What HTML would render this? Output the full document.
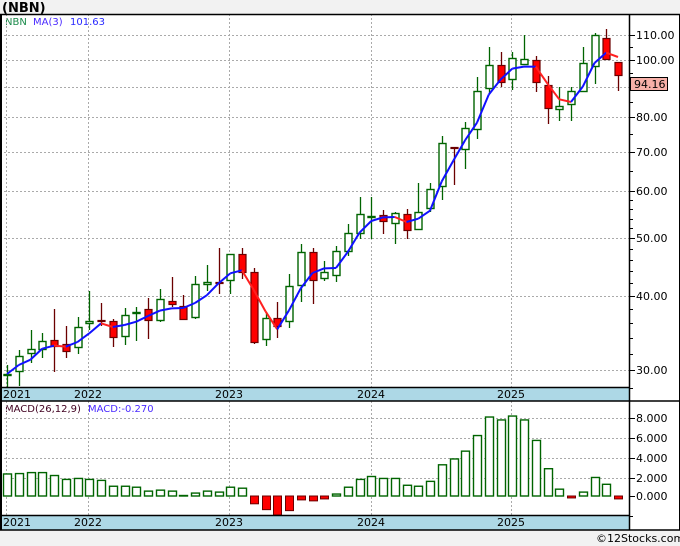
<!DOCTYPE html>
<html><head><meta charset="utf-8"><style>
html,body{margin:0;padding:0;background:#f2f2f2;}
svg{display:block;font-family:"DejaVu Sans","Liberation Sans",sans-serif;}
</style></head><body>
<svg id="s" width="680" height="546" xmlns="http://www.w3.org/2000/svg">
<rect x="0" y="0" width="680" height="546" fill="#f2f2f2"/>
<rect x="0" y="14" width="680" height="516" fill="#fff"/>
<text x="2" y="12" font-size="13" font-weight="bold" fill="#000">(NBN)</text>
<text x="5" y="25" font-size="10" fill="#1a8a4a">NBN</text>
<text x="33" y="25" font-size="10" fill="#4a2aff">MA(3)</text>
<text x="70" y="25" font-size="10" fill="#2a2aff">101.63</text>
<text x="5" y="412" font-size="10" fill="#400020">MACD(26,12,9)</text>
<text x="88" y="412" font-size="10" fill="#4a2aff">MACD:-0.270</text>
<text x="596" y="542" font-size="11" fill="#000">©12Stocks.com</text>
<g id="g"></g>
</svg>
<script>
var g=document.getElementById('g'),h='';
function L(x1,y1,x2,y2,c,w,d){h+='<line x1="'+x1+'" y1="'+y1+'" x2="'+x2+'" y2="'+y2+'" stroke="'+c+'" stroke-width="'+(w||1)+'"'+(d?' stroke-dasharray="'+d+'"':'')+'/>';}
function R(x,y,w,hh,f,s,sw){h+='<rect x="'+x+'" y="'+y+'" width="'+w+'" height="'+hh+'" fill="'+f+'" stroke="'+(s||'none')+'" stroke-width="'+(sw||1)+'"/>';}
function T(x,y,t,c,fs){h+='<text x="'+x+'" y="'+y+'" font-size="'+(fs||11)+'" fill="'+(c||'#000')+'">'+t+'</text>';}
var Y=function(p){return 35+258*Math.log(110/p);};
[110,100,90,80,70,60,50,40,30].forEach(function(p){var y=Math.round(Y(p))+.5;L(0,y,629,y,'#aaa',1,'2,2');});
[418,438,458,478].forEach(function(y){L(0,y+.5,629,y+.5,'#aaa',1,'2,2');});
[6,88,229,371,511].forEach(function(x){L(x+.5,14,x+.5,387,'#aaa',1,'2,2');L(x+.5,401,x+.5,515,'#aaa',1,'2,2');});
var C=[[365,374,376,387,1],[350,356,372,386,1],[330,349,354,363,1],[333,341,350,358,1],[309,340,347,372,0],[326,344,352,358,0],[317,327,348,354,1],[291,321,324,330,1],[303,320,322,326,0],[319,321,338,347,0],[308,315,337,345,1],[307,312,314,341,1],[298,309,321,339,0],[289,299,321,322,1],[277,301,305,307,0],[295,306,320,320,0],[276,284,318,319,1],[265,282,285,291,1],[248,282,284,294,0],[254,254,281,294,1],[248,254,273,279,0],[268,272,343,344,0],[312,318,340,346,1],[302,318,327,338,0],[274,286,322,328,1],[244,252,286,302,1],[248,252,281,304,0],[261,272,279,281,1],[246,251,276,282,1],[224,233,252,256,1],[197,214,234,239,1],[197,216,218,239,1],[210,215,222,234,0],[212,213,224,244,1],[209,214,231,239,0],[183,212,230,230,1],[183,189,209,212,1],[136,143,187,200,1],[147,147,149,185,0],[122,128,150,169,1],[77,91,130,139,1],[47,65,89,93,1],[52,65,83,87,0],[52,58,80,90,1],[35,59,65,65,1],[56,60,83,92,0],[76,85,109,124,0],[87,106,110,121,1],[87,91,105,121,1],[47,63,92,92,1],[33,35,67,84,1],[29,38,60,60,0],[62,62,76,91,0]];
var M=[2.26,2.3,2.4,2.4,2.1,1.7,1.8,1.7,1.6,1.0,1.0,0.9,0.5,0.6,0.5,0.05,0.3,0.5,0.4,0.9,0.8,-0.8,-1.4,-2.0,-1.5,-0.4,-0.5,-0.3,0.2,0.9,1.7,2.0,1.8,1.8,1.1,1.0,1.5,3.2,3.8,4.6,6.2,8.1,7.8,8.2,7.8,5.7,2.8,0.7,-0.2,0.4,1.9,1.2,-0.3];
var X=function(i){return 7+11.75*i;};
var closes=[];
C.forEach(function(c,i){var x=Math.round(X(i));
 var col=c[4]?'#006400':'#6b0000';
 L(x+.5,c[0],x+.5,c[3],col,1.3);
 var bh=Math.max(c[2]-c[1],2);
 if(c[4])R(x-3,c[1]+.5,7,bh-1,'#fff','#006400',1.4);else R(x-3,c[1]+.5,7,bh-1,'#ff0000','#6b0000',1.2);
 closes.push(c[4]?c[1]:c[2]);
});
var pts=[];for(var i=0;i<C.length;i++){var a=closes.slice(Math.max(0,i-2),i+1);var s=0;a.forEach(function(v){s+=v});pts.push(s/a.length);}
for(i=1;i<pts.length;i++){var c=pts[i]<=pts[i-1]?'#1010ff':'#ff2020';L(X(i-1),pts[i-1],X(i),pts[i],c,2);}
M.forEach(function(v,i){var x=Math.round(X(i))-4;var y=496-9.75*v;
 if(v>=0)R(x+.5,y,8,496-y,'#fff','#006400',1.4);else R(x+.5,496,8,Math.min(y,515)-496,'#ff0000','#6b0000',1);});
R(0,387,629,14,'#add8e6');R(0,515,629,15,'#add8e6');
L(0,387.5,629,387.5,'#000',1.5);L(0,401,680,401,'#000',1.5);L(0,515.5,629,515.5,'#000',1.5);L(0,530,680,530,'#000',1.5);
L(0,14.5,680,14.5,'#000',1.5);L(1,14,1,530,'#000',2);L(629.5,14,629.5,530,'#000',1.5);L(679.5,14,679.5,530,'#000',1);
[['2021',3],['2022',74],['2023',215],['2024',357],['2025',497]].forEach(function(a){T(a[1],398,a[0],'#000',11);T(a[1],526,a[0],'#000',11);});
for(var p=28;p<=114;p+=(p<60?2:5)){var y=Math.round(Y(p))+.5;L(629,y,633,y,'#000',1);}
[110,100,80,70,60,50,40,30].forEach(function(p){var y=Math.round(Y(p));L(629,y+.5,635,y+.5,'#000',1);T(636,y+4,p.toFixed(2),'#000',11);});
[[8,418],[6,438],[4,458],[2,478],[0,496]].forEach(function(a){L(629,a[1]+.5,635,a[1]+.5,'#000',1);T(636,a[1]+4,a[0].toFixed(3),'#000',11);});
L(629,516.5,633,516.5,'#000',1);
R(630.5,77.5,37,13,'#f7b0a8','#000',1);T(634,88,'94.16','#000',11);
g.innerHTML=h;
</script>
</body></html>
